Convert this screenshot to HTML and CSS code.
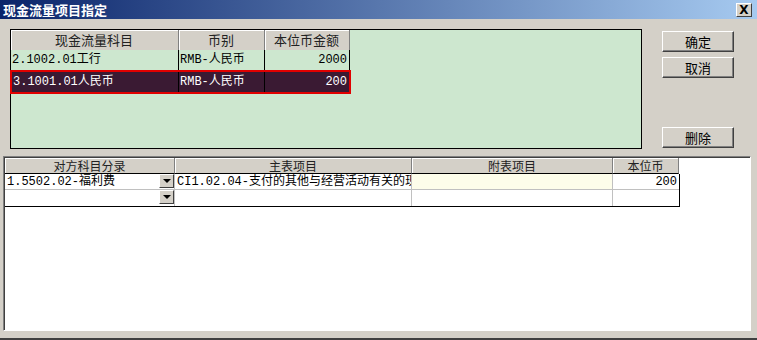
FILE: index.html
```html
<!DOCTYPE html>
<html lang="zh-CN">
<head>
    <meta charset="UTF-8">
    <title>现金流量项目指定</title>
    <link rel="stylesheet" href="styles.css">
</head>
<body>
    <div class="window">
        <div class="titlebar">
            <span class="title">现金流量项目指定</span>
            <span class="close">X</span>
        </div>

        <div class="top">
            <div class="grid-top">
                <div class="row head">
                    <div class="cell">现金流量科目</div>
                    <div class="cell">币别</div>
                    <div class="cell">本位币金额</div>
                </div>
                <div class="row">
                    <div class="cell">2.1002.01工行</div>
                    <div class="cell">RMB-人民币</div>
                    <div class="cell num">2000</div>
                </div>
                <div class="row sel">
                    <div class="cell">3.1001.01人民币</div>
                    <div class="cell">RMB-人民币</div>
                    <div class="cell num">200</div>
                </div>
            </div>

            <div class="buttons">
                <button class="btn">确定</button>
                <button class="btn">取消</button>
                <button class="btn btn-del">删除</button>
            </div>
        </div>

        <div class="panel">
            <div class="grid-bottom">
                <div class="brow head">
                    <div class="cell">对方科目分录</div>
                    <div class="cell">主表项目</div>
                    <div class="cell">附表项目</div>
                    <div class="cell">本位币</div>
                </div>
                <div class="brow">
                    <div class="cell combo"><span class="txt">1.5502.02-福利费</span><span class="drop"></span></div>
                    <div class="cell clip">CI1.02.04-支付的其他与经营活动有关的现金</div>
                    <div class="cell fill"></div>
                    <div class="cell num">200</div>
                </div>
                <div class="brow last">
                    <div class="cell combo"><span class="txt"></span><span class="drop"></span></div>
                    <div class="cell"></div>
                    <div class="cell"></div>
                    <div class="cell"></div>
                </div>
            </div>
        </div>
    </div>
</body>
</html>
```

FILE: styles.css
```css
body {
    margin: 0;
    font-family: "Liberation Mono", "Noto Sans CJK SC", monospace;
    font-size: 12px;
    background: #d4d0c8;
}
.window {
    width: 757px;
    height: 340px;
    box-sizing: border-box;
    background: #d4d0c8;
    border-bottom: 2px solid #404040;
    overflow: hidden;
}
.titlebar {
    height: 19px;
    background: linear-gradient(to right, #0a246a, #a6caf0);
    display: flex;
    align-items: center;
    justify-content: space-between;
    padding: 0 5px 0 3px;
}
.title {
    color: #fff;
    font-family: "Noto Sans CJK SC", sans-serif;
    font-weight: bold;
    font-size: 13px;
    line-height: 19px;
}
.close {
    width: 14px;
    height: 12px;
    background: #d4d0c8;
    border: 1px solid;
    border-color: #fff #404040 #404040 #fff;
    font-family: "DejaVu Sans", sans-serif;
    font-size: 12px;
    font-weight: bold;
    line-height: 12px;
    text-align: center;
    color: #000;
}

.top {
    display: flex;
    padding: 10px 0 0 10px;
    height: 120px;
}
.grid-top {
    width: 632px;
    height: 120px;
    box-sizing: border-box;
    border: 1px solid #000;
    background: #cde7cf;
}
.row {
    display: grid;
    grid-template-columns: 168px 86px 85px;
    height: 20px;
}
.row .cell {
    line-height: 20px;
    padding: 0 2px 0 1px;
    border-right: 1px solid #000;
    white-space: nowrap;
    overflow: hidden;
}
.row.head .cell {
    background: #d4d0c8;
    text-align: center;
    font-family: "Noto Sans CJK SC", sans-serif;
    font-size: 13px;
    color: #222;
    border-right: 1px solid #808080;
    box-shadow: inset 1px 1px 0 #fff;
}
.row.sel {
    height: 24px;
    width: 341px;
    margin-left: -1px;
    box-sizing: border-box;
    border: 2px solid #e00000;
    background: #3a1a33;
    color: #fff;
    grid-template-columns: 167px 86px 84px;
}
.row.sel .cell {
    border-right-color: #000;
}
.row.sel .cell:last-child {
    border-right: none;
}
.num {
    text-align: right;
}

.buttons {
    display: flex;
    flex-direction: column;
    gap: 5px;
    margin-left: 20px;
    padding-top: 2px;
}
.btn {
    width: 72px;
    height: 21px;
    padding: 0;
    background: #d4d0c8;
    border: 1px solid;
    border-color: #fff #404040 #404040 #fff;
    box-shadow: inset -1px -1px 0 #808080;
    font-family: "Noto Sans CJK SC", sans-serif;
    font-size: 13px;
    color: #000;
}
.btn-del {
    margin-top: 44px;
}

.panel {
    margin: 7px 6px 0 3px;
    height: 175px;
    box-sizing: border-box;
    background: #fff;
    border: 1px solid;
    border-color: #808080 #fff #fff #808080;
    box-shadow: inset 1px 1px 0 #404040;
    padding: 1px 0 0 1px;
}
.grid-bottom {
    width: 675px;
}
.brow {
    display: grid;
    grid-template-columns: 170px 237px 201px 66px;
    height: 16px;
    border-right: 1px solid #000;
}
.brow .cell {
    line-height: 16px;
    padding: 0 2px;
    border-right: 1px solid #c0c0c0;
    border-bottom: 1px solid #c0c0c0;
    white-space: nowrap;
    overflow: hidden;
    box-sizing: border-box;
}
.brow .cell:last-child {
    border-right: none;
}
.brow.head {
    border-right: none;
}
.brow.head .cell {
    background: #d4d0c8;
    text-align: center;
    font-family: "Noto Sans CJK SC", sans-serif;
    font-size: 12px;
    line-height: 15px;
    color: #222;
    border-right: 1px solid #808080;
    border-bottom: 1px solid #000;
    box-shadow: inset 1px 1px 0 #fff;
}
.brow.last {
    border-bottom: 1px solid #000;
}
.brow.last .cell {
    border-bottom: none;
}
.combo {
    display: flex;
    justify-content: space-between;
    padding-right: 0 !important;
}
.drop {
    width: 15px;
    height: 14px;
    background: #d4d0c8;
    box-sizing: border-box;
    border: 1px solid;
    border-color: #fff #404040 #404040 #fff;
    position: relative;
}
.drop::after {
    content: "";
    position: absolute;
    left: 3px;
    top: 4px;
    border-left: 4px solid transparent;
    border-right: 4px solid transparent;
    border-top: 4px solid #000;
}
.fill {
    background: #fdfdea;
}
.clip {
    text-overflow: clip;
}
```
